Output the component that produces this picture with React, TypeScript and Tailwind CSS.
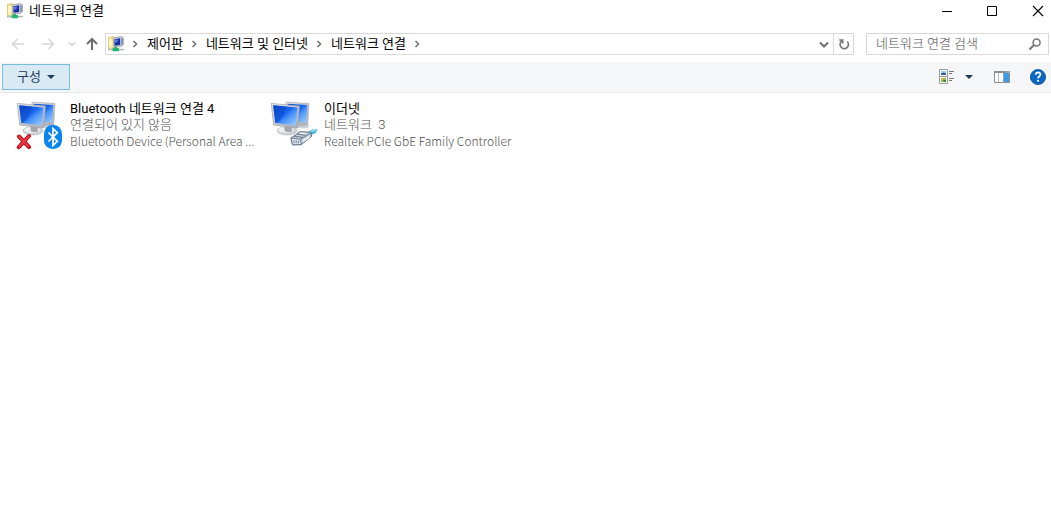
import type { ReactNode } from 'react';

function NetworkFolderIcon({ className }: { className?: string }) {
  return (
    <svg viewBox="0 0 16 16" className={className} aria-hidden="true">
      <path d="M.5 1.5 5 .6l1 1h2v9.9l-7.5 1z" fill="#f6e28d" stroke="#d6b95a" strokeWidth=".7" />
      <path d="M1 3.2 4.3 2.5v8.7L1 11.8z" fill="#fef4bd" />
      <path d="m5.2 1.7 8-1.2 2.3 1.2v7L13.2 10.7l-7.4.5z" fill="#c5cad6" stroke="#8f96a7" strokeWidth=".6" />
      <path d="m6.5 3.2 5.6-.9v6.6l-5.6.8z" fill="#1a2fa6" />
      <path d="m7.2 3.8 2.5-.4v2.2l-2.5 1.3z" fill="#6685ea" />
      <path d="m13.2 2 1.8.4v5.8l-1.8 1.6z" fill="#8290b0" />
      <path d="M0 13.6h16" stroke="#b0bab4" strokeWidth="1.5" />
      <path d="M7.8 10.8v3" stroke="#21a366" strokeWidth="2.4" />
      <rect x="4.5" y="12" width="6.5" height="3.2" rx=".7" fill="#1fb573" />
    </svg>
  );
}

function Monitors() {
  return (
    <g transform="translate(0 1)">
      <defs>
        <linearGradient id="screen" x1="0" y1="0" x2="1" y2="1">
          <stop offset="0" stopColor="#0b45cc" />
          <stop offset=".45" stopColor="#1a66ee" />
          <stop offset=".6" stopColor="#4a93fa" />
          <stop offset="1" stopColor="#a3d3ff" />
        </linearGradient>
        <linearGradient id="frame" x1="0" y1="0" x2="1" y2="1">
          <stop offset="0" stopColor="#e6e8eb" />
          <stop offset="1" stopColor="#a6abb2" />
        </linearGradient>
      </defs>
      <ellipse cx="33" cy="26" rx="6" ry="2.6" fill="#cbced3" />
      <path d="m29 21 5 1 1 4h-8z" fill="#b3b6bc" />
      <path d="m16 2 23 1.6-1.4 21-20-1.6z" fill="url(#frame)" stroke="#a9adb4" strokeWidth=".7" />
      <path d="m17.6 3.7 19.7 1.4-1.2 17.4-17-1.4z" fill="url(#screen)" />
      <ellipse cx="17" cy="30.8" rx="10" ry="4.2" fill="#cdd0d4" stroke="#b2b5bb" strokeWidth=".6" />
      <ellipse cx="16" cy="29.9" rx="8" ry="2.8" fill="#eeeff1" />
      <path d="m14.5 26 7 1 .5 4.2c-2 1.4-6 1.1-7.5-.5z" fill="#a2a6ad" />
      <path d="m1.2 3.4 28.2 2.6-1.7 22-24-3z" fill="url(#frame)" stroke="#9fa4ab" strokeWidth=".7" />
      <path d="m3.1 5.2 24.3 2.3-1.5 18.1L5.3 23.1z" fill="url(#screen)" />
      <path d="m3.1 5.2 13 1.2c-1 7-4 12.9-9.8 16.8l-1-.1z" fill="#083fbd" opacity=".35" />
    </g>
  );
}

function BluetoothConnectionIcon() {
  return (
    <svg viewBox="0 0 48 52" className="h-13 w-12 shrink-0" aria-hidden="true">
      <Monitors />
      <path d="m3 37.5 10 10.5M13 37 2.8 48.2" stroke="#a80f19" strokeWidth="4" strokeLinecap="round" />
      <path d="m3 37.5 9.6 10M12.9 37.2 3 47.8" stroke="#ee3540" strokeWidth="2.2" strokeLinecap="round" />
      <rect x="28" y="26" width="18" height="24" rx="8.5" fill="#0a84ee" />
      <path d="m32.5 33.5 8.8 8.8-4.3 4.2V29.5l4.3 4.2-8.8 8.8" fill="none" stroke="#fff" strokeWidth="1.7" />
    </svg>
  );
}

function EthernetConnectionIcon() {
  return (
    <svg viewBox="0 0 48 52" className="h-13 w-12 shrink-0" aria-hidden="true">
      <Monitors />
      <path d="m36 34 6-3.5 5.4-.3-1.4 3.3-3 1.7-5 2.8z" fill="#41b6de" />
      <path d="m39 33.2 7-2.5" stroke="#a9e8fa" strokeWidth="1.2" />
      <path d="m21 39 9-6.3 11 .5.6 4.3L31 45.6l-8.5.2z" fill="#c5d0dc" stroke="#51647b" strokeWidth=".9" strokeLinejoin="round" />
      <path d="m21 39 9.5 1.2.7 5.4-8.7.2z" fill="#e2e9ef" stroke="#51647b" strokeWidth=".8" />
      <path d="m30.5 40.2 10.8-6.6M24 37.2l9 1.2M27 35l8.5 1.4" stroke="#51647b" strokeWidth=".8" />
      <path d="M24 41v3.4M26.2 41.2v3.2M28.4 41.4v3" stroke="#65778c" strokeWidth=".9" />
      <path d="m33 42 6.5-4" stroke="#f7fafc" strokeWidth="1.6" />
      <path d="m30 34.2 5 .3" stroke="#fff" />
    </svg>
  );
}

function Chevron() {
  return (
    <svg viewBox="0 0 23 8" className="h-2 w-[23px] shrink-0" fill="none" stroke="#777" strokeWidth="1.7" aria-hidden="true">
      <path d="m9.5 1 3 3-3 3" />
    </svg>
  );
}

function Arrow({ d, className }: { d: string; className: string }) {
  return (
    <svg viewBox="0 0 14 14" className={className} fill="none" stroke="currentColor" aria-hidden="true">
      <path d={d} />
    </svg>
  );
}

function Connection({ icon, name, status, device }: { icon: ReactNode; name: string; status: string; device: string }) {
  return (
    <li className="flex w-[254px] items-start gap-1.5">
      {icon}
      <div className="whitespace-nowrap pt-0.5 leading-4 text-[#505050]">
        <p className="text-black">{name}</p>
        <p className="whitespace-pre font-light">{status}</p>
        <p className="font-['Noto_Sans_CJK_KR',sans-serif] text-xs font-light leading-4">{device}</p>
      </div>
    </li>
  );
}

const crumbs = ['제어판', '네트워크 및 인터넷', '네트워크 연결'];

export default function App() {
  return (
    <div className="min-h-screen bg-white font-['Roboto','Noto_Sans_CJK_KR',sans-serif] text-[13px] text-black">
      <header className="flex h-[22px] items-center pl-[7px]">
        <NetworkFolderIcon className="h-4 w-4" />
        <h1 className="ml-1.5 flex-1 leading-4">네트워크 연결</h1>
        <div className="flex items-center gap-[29px] pr-[5px]">
          <button type="button" aria-label="최소화" className="h-4 w-4">
            <svg viewBox="0 0 16 16" fill="none" stroke="#000"><path d="M2 8.5h10" /></svg>
          </button>
          <button type="button" aria-label="최대화" className="h-4 w-4">
            <svg viewBox="0 0 16 16" fill="none" stroke="#000"><path d="M2.5 3.5h9v9h-9z" /></svg>
          </button>
          <button type="button" aria-label="닫기" className="h-4 w-4">
            <svg viewBox="0 0 16 16" fill="none" stroke="#000" strokeWidth="1.1"><path d="m3 3 10 10M13 3 3 13" /></svg>
          </button>
        </div>
      </header>

      <div className="flex h-10 items-center pr-0.5 pt-1">
        <nav aria-label="탐색" className="flex w-[105px] items-center pl-[11px]">
          <button type="button" aria-label="뒤로" disabled className="text-[#d6d6d6]">
            <Arrow className="h-3.5 w-3.5 stroke-[1.5]" d="M13 7H1.5M6.5 2l-5 5 5 5" />
          </button>
          <button type="button" aria-label="앞으로" disabled className="ml-4 text-[#d6d6d6]">
            <Arrow className="h-3.5 w-3.5 stroke-[1.5]" d="M1 7h11.5m-5-5 5 5-5 5" />
          </button>
          <button type="button" aria-label="최근 위치" disabled className="ml-2.5 text-[#d0d0d0]">
            <Arrow className="h-3.5 w-3.5 stroke-[1.5]" d="m4 5.5 3 3 3-3" />
          </button>
          <button type="button" aria-label="위로" className="ml-1.5 text-[#6e6e6e]">
            <Arrow className="h-3.5 w-3.5 stroke-2" d="M7 13V2M2 7l5-5 5 5" />
          </button>
        </nav>
        <div className="flex h-[22px] flex-1 items-center border border-[#d9d9d9] pl-0.5">
          <NetworkFolderIcon className="h-4 w-4" />
          <ol className="flex flex-1 items-center">
            <li className="flex items-center"><Chevron /></li>
            {crumbs.map((crumb) => (
              <li key={crumb} className="flex items-center">
                <a href="#" className="whitespace-nowrap leading-4">{crumb}</a>
                <Chevron />
              </li>
            ))}
          </ol>
          <button type="button" aria-label="이전 위치" className="flex w-[18px] justify-center text-[#707070]">
            <Arrow className="h-3.5 w-3.5 stroke-2" d="m3 5.5 4 4 4-4" />
          </button>
          <button type="button" aria-label="새로 고침" className="flex h-full w-5 items-center justify-center border-l border-[#d9d9d9] text-[#777]">
            <svg viewBox="0 0 14 14" className="h-3.5 w-3.5" fill="none" stroke="currentColor" strokeWidth="1.6" aria-hidden="true">
              <path d="M10.3 4.5A4.2 4.2 0 1 1 4.8 4M2.2 3h3.5v3.6" />
            </svg>
          </button>
        </div>
        <label className="ml-3 flex h-[22px] w-[183px] items-center border border-[#d9d9d9] pl-[9px] pr-1.5">
          <input type="text" aria-label="네트워크 연결 검색" placeholder="네트워크 연결 검색" className="h-4 min-w-0 flex-1 font-light leading-4 outline-none placeholder:text-[#505050]" />
          <svg viewBox="0 0 14 14" className="h-3.5 w-3.5" fill="none" stroke="#757575" strokeWidth="1.5" aria-hidden="true">
            <circle cx="8.6" cy="5.4" r="3.5" />
            <path d="m6.2 7.8-4.7 4.7" strokeWidth="2" />
          </svg>
        </label>
      </div>

      <div className="flex h-[31px] items-center border-b border-[#e8e9ea] bg-[#f5f6f7] pl-0.5 pr-[5px]">
        <button type="button" className="flex h-[26px] w-[68px] items-center justify-center gap-1.5 border border-[#7abcdc] bg-[#d9eaf4] leading-4 text-[#1e395b]">
          구성
          <svg viewBox="0 0 8 4" className="h-1 w-2" fill="#1e395b" aria-hidden="true"><path d="M0 0h8L4 4z" /></svg>
        </button>
        <div className="ml-auto flex items-center">
          <button type="button" aria-label="보기 변경">
            <svg viewBox="0 0 16 16" className="h-4 w-4" aria-hidden="true">
              <path d="M.5.5h8v7h-8zM.5 7.5h8v7h-8z" fill="#fff" stroke="#9a9a9a" />
              <path d="M2 2h5v4H2z" fill="#9fd3f5" />
              <path d="M2 4.2 5 3.6l2 .6V6H2z" fill="#2f6496" />
              <path d="M2 9h5v4H2z" fill="#8db750" />
              <path d="M2 9h2.5v2H2z" fill="#dfb346" />
              <path d="M4.5 11H7v2H4.5z" fill="#4a8038" />
              <path d="M10 2.5h5M10 4.5h3M10 9.5h5M10 11.5h3" stroke="#777" />
            </svg>
          </button>
          <button type="button" aria-label="추가 옵션" className="ml-2.5">
            <svg viewBox="0 0 8 4" className="h-1 w-2" fill="#1e395b" aria-hidden="true"><path d="M0 0h8L4 4z" /></svg>
          </button>
          <button type="button" aria-label="미리 보기 창" className="ml-[21px]">
            <svg viewBox="0 0 16 12" className="h-3 w-4" aria-hidden="true">
              <path d="M.5.5h15v11H.5z" fill="#fff" stroke="#8b8f94" />
              <path d="M0 0h16v2H0z" fill="#8b8f94" />
              <path d="M4.5 2v9" stroke="#b4b8bb" />
              <path d="M9.5 2H15v9H9.5z" fill="#3f9ae5" />
              <path d="M9.5 2v9" stroke="#7aa9d4" />
              <path d="M12 .5h1v1h-1zM14 .5h1v1h-1z" fill="#cfe8fb" />
            </svg>
          </button>
          <button type="button" aria-label="도움말" className="ml-5">
            <svg viewBox="0 0 16 16" className="h-4 w-4" aria-hidden="true">
              <circle cx="8" cy="8" r="7.6" fill="#0b66c3" stroke="#07519e" strokeWidth=".8" />
              <path d="M5.8 5.8c.1-3.2 4.8-3 4.6-.2-.1 1.6-2.3 1.8-2.3 3.8" fill="none" stroke="#fff" strokeWidth="1.7" />
              <circle cx="8.1" cy="11.8" r="1.1" fill="#fff" />
            </svg>
          </button>
        </div>
      </div>

      <main className="pl-4 pt-1.5">
        <ul className="flex flex-wrap">
          <Connection icon={<BluetoothConnectionIcon />} name="Bluetooth 네트워크 연결 4" status="연결되어 있지 않음" device="Bluetooth Device (Personal Area ..." />
          <Connection icon={<EthernetConnectionIcon />} name="이더넷" status="네트워크  3" device="Realtek PCIe GbE Family Controller" />
        </ul>
      </main>
    </div>
  );
}
